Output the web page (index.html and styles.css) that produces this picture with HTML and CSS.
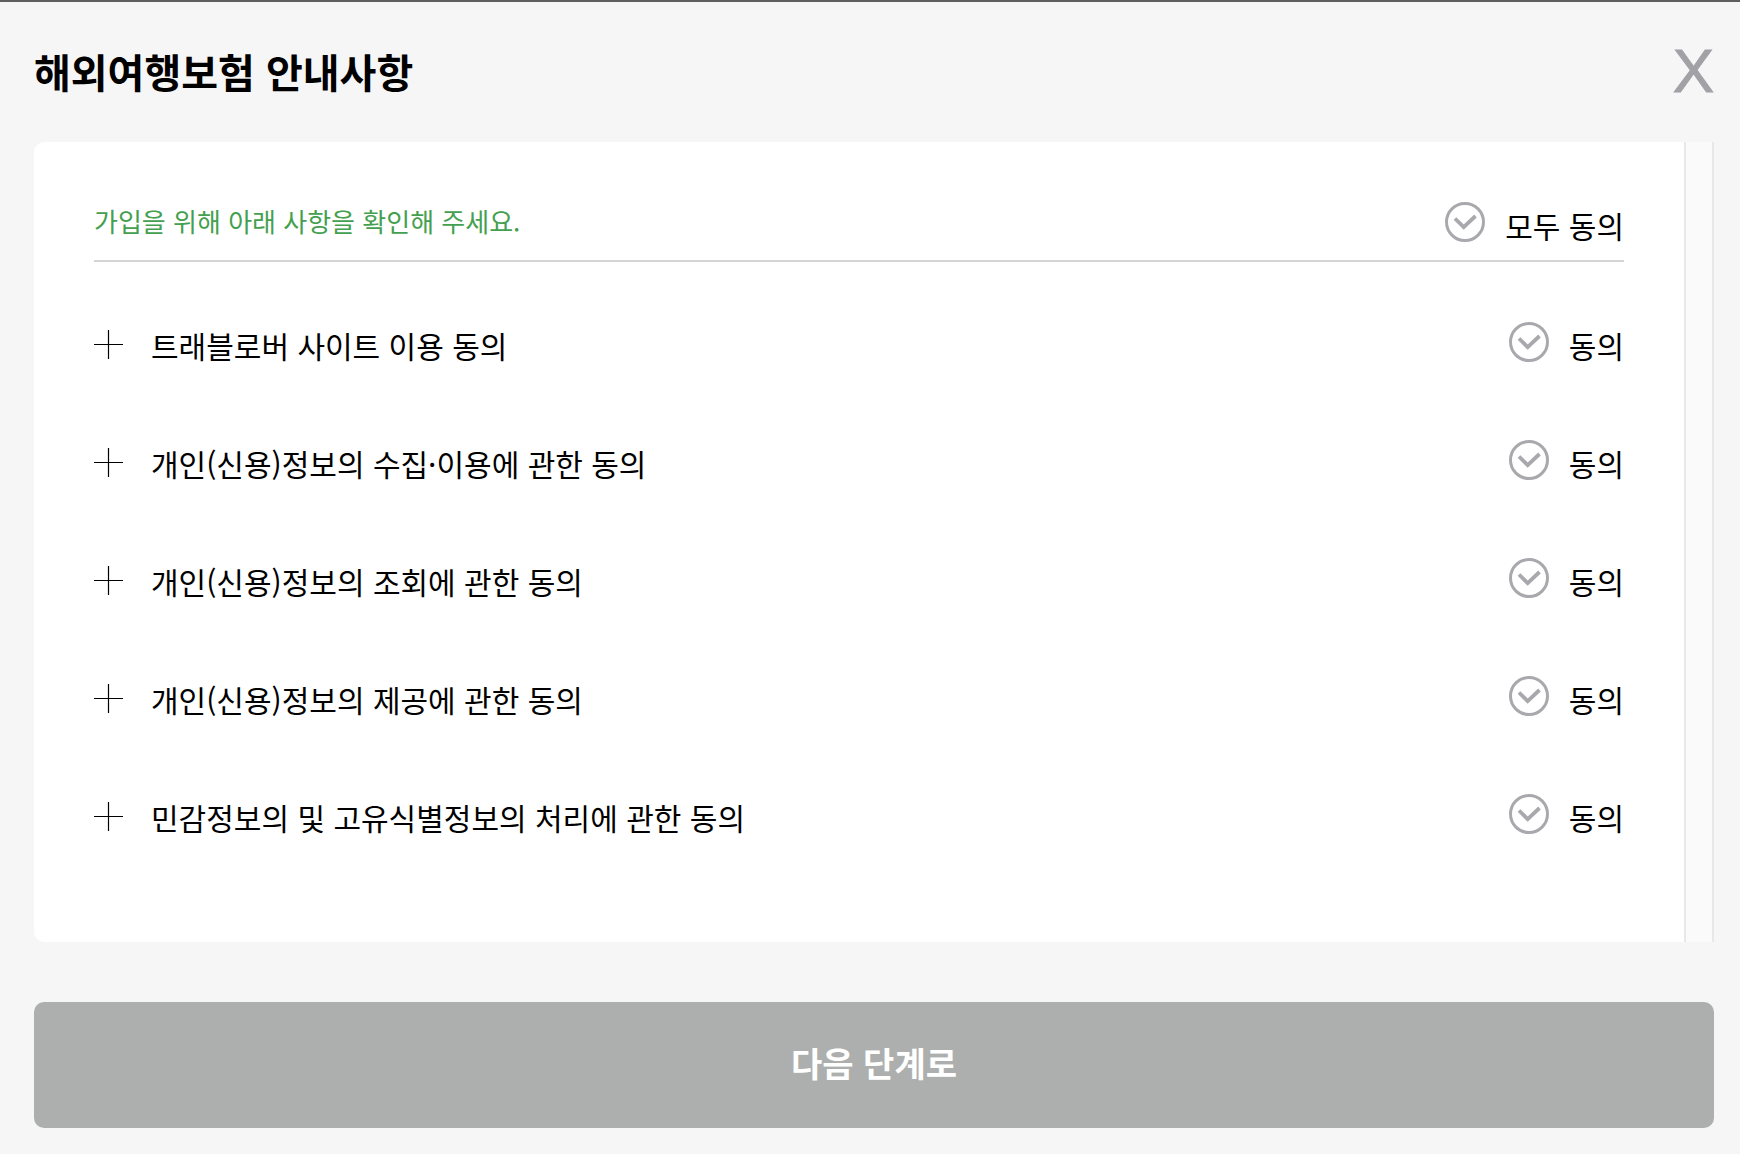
FILE: index.html
```
<!DOCTYPE html>
<html lang="ko">
<head>
<meta charset="utf-8">
<meta name="viewport" content="width=device-width, initial-scale=1">
<title>해외여행보험 안내사항</title>
<link rel="stylesheet" href="styles.css">
</head>
<body>
<svg class="sprite" aria-hidden="true">
  <symbol id="plus" viewBox="0 0 29 29"><path d="M0 14.5H29M14.5 0V29" fill="none" stroke="#000" stroke-width="1.2"/></symbol>
  <symbol id="check" viewBox="0 0 40 40"><circle cx="20" cy="20" r="18.5" fill="none" stroke="currentColor" stroke-width="3"/><path d="M10 16.5L18.7 25.2L30.5 14" fill="none" stroke="currentColor" stroke-width="3.8"/></symbol>
</svg>
<main class="dialog">
  <header class="dialog-header">
    <h1 class="title">해외여행보험 안내사항</h1>
    <button class="close" type="button" aria-label="닫기">X</button>
  </header>
  <form class="form">
    <div class="panel">
      <div class="terms">
        <div class="terms-head">
          <p class="guide">가입을 위해 아래 사항을 확인해 주세요.</p>
          <label class="agree"><span class="check"><input type="checkbox"><svg><use href="#check"/></svg></span>모두 동의</label>
        </div>
        <ul class="list">
          <li class="row">
            <button class="toggle" type="button"><svg class="plus"><use href="#plus"/></svg>트래블로버 사이트 이용 동의</button>
            <label class="agree"><span class="check"><input type="checkbox"><svg><use href="#check"/></svg></span>동의</label>
          </li>
          <li class="row">
            <button class="toggle" type="button"><svg class="plus"><use href="#plus"/></svg>개인(신용)정보의 수집·이용에 관한 동의</button>
            <label class="agree"><span class="check"><input type="checkbox"><svg><use href="#check"/></svg></span>동의</label>
          </li>
          <li class="row">
            <button class="toggle" type="button"><svg class="plus"><use href="#plus"/></svg>개인(신용)정보의 조회에 관한 동의</button>
            <label class="agree"><span class="check"><input type="checkbox"><svg><use href="#check"/></svg></span>동의</label>
          </li>
          <li class="row">
            <button class="toggle" type="button"><svg class="plus"><use href="#plus"/></svg>개인(신용)정보의 제공에 관한 동의</button>
            <label class="agree"><span class="check"><input type="checkbox"><svg><use href="#check"/></svg></span>동의</label>
          </li>
          <li class="row">
            <button class="toggle" type="button"><svg class="plus"><use href="#plus"/></svg>민감정보의 및 고유식별정보의 처리에 관한 동의</button>
            <label class="agree"><span class="check"><input type="checkbox"><svg><use href="#check"/></svg></span>동의</label>
          </li>
        </ul>
      </div>
      <div class="scroll-track"></div>
    </div>
    <button class="next" type="submit">다음 단계로</button>
  </form>
</main>
</body>
</html>
```
FILE: styles.css
```
* {
  box-sizing: border-box;
}

body {
  margin: 0;
  background: #f6f6f6;
  color: #000;
  font-family: "Noto Sans CJK KR", sans-serif;
}

button {
  padding: 0;
  border: 0;
  background: none;
  color: inherit;
  font: inherit;
  cursor: pointer;
}

.sprite {
  display: none;
}

.dialog {
  min-height: 100vh;
  padding: 0 26px 26px 34px;
  border-top: 2px solid #5f5d5d;
}

.dialog-header {
  display: flex;
  align-items: center;
  justify-content: space-between;
  height: 140px;
  padding-bottom: 3px;
}

.title {
  margin: 0;
  font-size: 40px;
  line-height: 60px;
  font-weight: 700;
}

.close {
  color: #a2a1a6;
  font-family: "Liberation Sans", sans-serif;
  font-size: 62px;
  line-height: 62px;
  -webkit-text-stroke: 1px #a2a1a6;
}

.form {
  display: flex;
  flex-direction: column;
  gap: 60px;
}

.panel {
  display: flex;
  border-radius: 10px 0 0 10px;
  background: #fff;
}

.terms {
  flex: 1;
  padding: 60px 60px 80px;
}

.scroll-track {
  width: 30px;
  border: solid #e8e8e8;
  border-width: 0 2px;
  background: #fafafa;
}

.terms-head {
  display: flex;
  justify-content: space-between;
  height: 60px;
  border-bottom: 2px solid #d5d5d5;
}

.guide {
  margin: 0;
  color: #43a04f;
  font-size: 26px;
  line-height: 38px;
}

.list {
  margin: 0;
  padding: 60px 0 0;
  list-style: none;
}

.row {
  display: flex;
  align-items: flex-start;
  justify-content: space-between;
  height: 118px;
}

.row:last-child {
  height: 68px;
}

.toggle,
.agree {
  display: flex;
  font-size: 30px;
  line-height: 46px;
}

.toggle {
  gap: 28px;
}

.plus {
  width: 29px;
  height: 29px;
  margin-top: 8px;
}

.agree {
  gap: 20px;
}

.check {
  display: grid;
  width: 40px;
  height: 40px;
  color: #a9a9ad;
}

.check input,
.check svg {
  grid-area: 1 / 1;
  width: 40px;
  height: 40px;
  margin: 0;
}

.check input {
  appearance: none;
}

.check svg {
  pointer-events: none;
}

.check input:checked + svg {
  color: #43a04f;
}

.next {
  height: 126px;
  padding-bottom: 6px;
  border-radius: 10px;
  background: #adafae;
  color: #fff;
  font-size: 34px;
  font-weight: 700;
}
```
